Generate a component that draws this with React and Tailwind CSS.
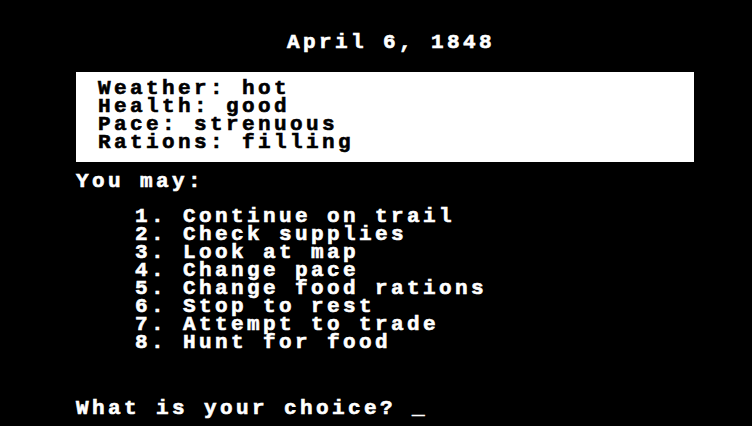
import React from "react";

const options = [
  "Continue on trail",
  "Check supplies",
  "Look at map",
  "Change pace",
  "Change food rations",
  "Stop to rest",
  "Attempt to trade",
  "Hunt for food",
];

const status = [
  ["Weather", "hot"],
  ["Health", "good"],
  ["Pace", "strenuous"],
  ["Rations", "filling"],
];

const App = () => {
  return (
    <div
      className="w-[752px] h-[426px] bg-black text-white overflow-hidden font-bold text-[21px] leading-[18px] tracking-[3.4px] whitespace-pre [-webkit-text-stroke:0.6px_currentColor]"
      style={{ fontFamily: '"Liberation Mono", "DejaVu Sans Mono", monospace' }}
    >
      <div className="pt-[34px] pl-[287px]">April 6, 1848</div>
      <div className="mx-[76px] mt-[20px] w-[618px] h-[90px] bg-white text-black pt-[8px] pl-[22px]">
        {status.map(([label, value]) => (
          <div key={label}>
            {label}: {value}
          </div>
        ))}
      </div>
      <div className="pl-[76px] mt-[11px]">You may:</div>
      <div className="pl-[135px] mt-[17px]">
        {options.map((opt, i) => (
          <div key={opt}>
            {i + 1}. {opt}
          </div>
        ))}
      </div>
      <div className="pl-[76px] mt-[48px]">What is your choice? _</div>
    </div>
  );
};

export default App;
